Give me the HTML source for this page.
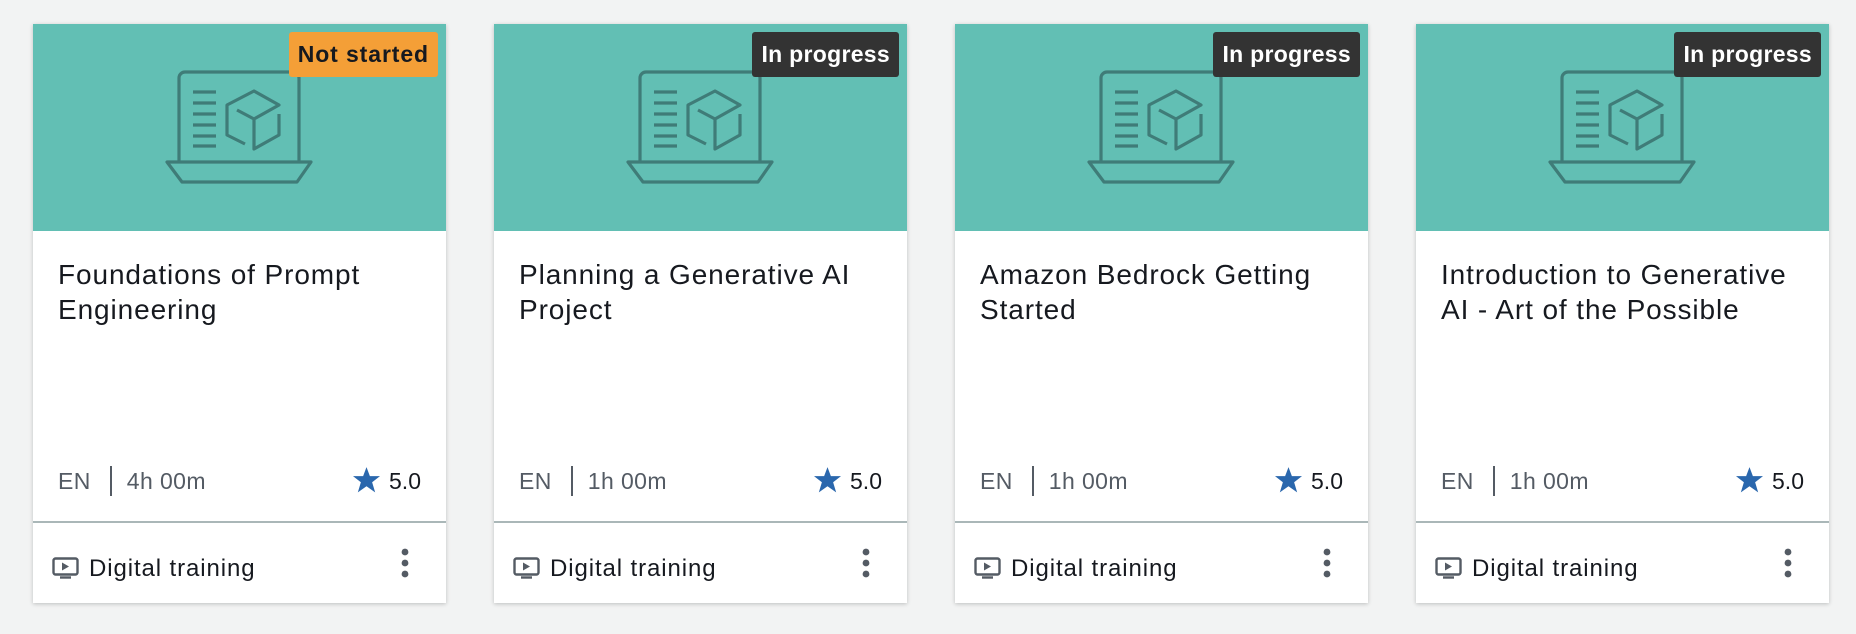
<!DOCTYPE html>
<html><head><meta charset="utf-8"><style>
*{margin:0;padding:0;box-sizing:border-box}
body{width:1856px;height:634px;background:#f2f3f3;font-family:"Liberation Sans",sans-serif;position:relative;overflow:hidden}
.card{position:absolute;top:24px;width:413px;height:579px;background:#fff;box-shadow:0 1px 4px rgba(0,0,0,.22)}
.img{position:absolute;left:0;top:0;width:413px;height:207px;background:#62bfb4}
.img svg{position:absolute;left:0;top:0}
.badge{position:absolute;top:8px;right:8px;height:45px;padding:0 9px;border-radius:3px;font-weight:bold;font-size:23px;line-height:45px;color:#fff;background:#333;letter-spacing:0.3px}
.badge.ns{background:#f49f37;color:#16191f;letter-spacing:0.9px}
.title{position:absolute;left:25px;top:233px;width:375px;font-size:28px;letter-spacing:0.9px;line-height:35px;color:#16191f}
.meta{position:absolute;left:25px;top:439px;font-size:23px;color:#545b64;line-height:36px;letter-spacing:0.4px}
.meta .sep{display:inline-block;width:2px;height:30px;background:#545b64;vertical-align:middle;margin:0 15px 0 19px;position:relative;top:-2px}
.rate{position:absolute;right:25px;top:439px;font-size:23px;color:#16191f;line-height:36px}
.rate svg{vertical-align:middle;margin-right:9px;position:relative;top:-3px}
.div{position:absolute;left:0;right:0;top:497px;height:2px;background:#aab7b8}
.foot{position:absolute;left:19px;top:527px;font-size:24px;color:#16191f;line-height:36px;letter-spacing:0.9px}
.foot svg{vertical-align:middle;margin-right:10px;position:relative;top:-2px}
.kebab{position:absolute;left:366px;top:522px}
</style></head><body>

<div class="card" style="left:33px">
<div class="img"><svg width="413" height="207" viewBox="0 0 413 207" fill="none" stroke="#3f7c78" stroke-width="3.2" stroke-linejoin="round"><g transform="translate(0,-24)">
<path d="M146 162V78a6 6 0 0 1 6-6h108a6 6 0 0 1 6 6v84"/>
<path d="M134 162h144l-14 20H149z"/>
<path d="M160 92h23M160 103h23M160 114h23M160 125h23M160 136h23M160 146h23"/>
<path d="M212 144L194 135V105L221 91L246 105L221 119L204 110M221 119V149L246 135V114"/>
</g></svg><div class="badge ns">Not started</div></div>
<div class="title">Foundations of Prompt Engineering</div>
<div class="meta">EN<span class="sep"></span>4h 00m</div>
<div class="rate"><svg width="27" height="26" viewBox="0 0 24 23"><path fill="#2a67ad" d="M12 0l3 8h9l-7 5.5 2.7 9L12 17l-7.7 5.5 2.7-9L0 8h9z"/></svg>5.0</div>
<div class="div"></div>
<div class="foot"><svg width="27" height="22" viewBox="0 0 27 22" fill="none" stroke="#545b64" stroke-width="2.4"><rect x="1.5" y="1.5" width="24" height="16" rx="2"/><path d="M10 5.5v8l7-4z" fill="#545b64" stroke="none"/><path d="M8 20.5h11"/></svg>Digital training</div>
<svg class="kebab" width="12" height="40" viewBox="0 0 12 40" fill="#545b64"><circle cx="6" cy="6" r="3.4"/><circle cx="6" cy="17" r="3.4"/><circle cx="6" cy="28" r="3.4"/></svg>
</div>

<div class="card" style="left:494px">
<div class="img"><svg width="413" height="207" viewBox="0 0 413 207" fill="none" stroke="#3f7c78" stroke-width="3.2" stroke-linejoin="round"><g transform="translate(0,-24)">
<path d="M146 162V78a6 6 0 0 1 6-6h108a6 6 0 0 1 6 6v84"/>
<path d="M134 162h144l-14 20H149z"/>
<path d="M160 92h23M160 103h23M160 114h23M160 125h23M160 136h23M160 146h23"/>
<path d="M212 144L194 135V105L221 91L246 105L221 119L204 110M221 119V149L246 135V114"/>
</g></svg><div class="badge">In progress</div></div>
<div class="title">Planning a Generative AI Project</div>
<div class="meta">EN<span class="sep"></span>1h 00m</div>
<div class="rate"><svg width="27" height="26" viewBox="0 0 24 23"><path fill="#2a67ad" d="M12 0l3 8h9l-7 5.5 2.7 9L12 17l-7.7 5.5 2.7-9L0 8h9z"/></svg>5.0</div>
<div class="div"></div>
<div class="foot"><svg width="27" height="22" viewBox="0 0 27 22" fill="none" stroke="#545b64" stroke-width="2.4"><rect x="1.5" y="1.5" width="24" height="16" rx="2"/><path d="M10 5.5v8l7-4z" fill="#545b64" stroke="none"/><path d="M8 20.5h11"/></svg>Digital training</div>
<svg class="kebab" width="12" height="40" viewBox="0 0 12 40" fill="#545b64"><circle cx="6" cy="6" r="3.4"/><circle cx="6" cy="17" r="3.4"/><circle cx="6" cy="28" r="3.4"/></svg>
</div>

<div class="card" style="left:955px">
<div class="img"><svg width="413" height="207" viewBox="0 0 413 207" fill="none" stroke="#3f7c78" stroke-width="3.2" stroke-linejoin="round"><g transform="translate(0,-24)">
<path d="M146 162V78a6 6 0 0 1 6-6h108a6 6 0 0 1 6 6v84"/>
<path d="M134 162h144l-14 20H149z"/>
<path d="M160 92h23M160 103h23M160 114h23M160 125h23M160 136h23M160 146h23"/>
<path d="M212 144L194 135V105L221 91L246 105L221 119L204 110M221 119V149L246 135V114"/>
</g></svg><div class="badge">In progress</div></div>
<div class="title">Amazon Bedrock Getting Started</div>
<div class="meta">EN<span class="sep"></span>1h 00m</div>
<div class="rate"><svg width="27" height="26" viewBox="0 0 24 23"><path fill="#2a67ad" d="M12 0l3 8h9l-7 5.5 2.7 9L12 17l-7.7 5.5 2.7-9L0 8h9z"/></svg>5.0</div>
<div class="div"></div>
<div class="foot"><svg width="27" height="22" viewBox="0 0 27 22" fill="none" stroke="#545b64" stroke-width="2.4"><rect x="1.5" y="1.5" width="24" height="16" rx="2"/><path d="M10 5.5v8l7-4z" fill="#545b64" stroke="none"/><path d="M8 20.5h11"/></svg>Digital training</div>
<svg class="kebab" width="12" height="40" viewBox="0 0 12 40" fill="#545b64"><circle cx="6" cy="6" r="3.4"/><circle cx="6" cy="17" r="3.4"/><circle cx="6" cy="28" r="3.4"/></svg>
</div>

<div class="card" style="left:1416px">
<div class="img"><svg width="413" height="207" viewBox="0 0 413 207" fill="none" stroke="#3f7c78" stroke-width="3.2" stroke-linejoin="round"><g transform="translate(0,-24)">
<path d="M146 162V78a6 6 0 0 1 6-6h108a6 6 0 0 1 6 6v84"/>
<path d="M134 162h144l-14 20H149z"/>
<path d="M160 92h23M160 103h23M160 114h23M160 125h23M160 136h23M160 146h23"/>
<path d="M212 144L194 135V105L221 91L246 105L221 119L204 110M221 119V149L246 135V114"/>
</g></svg><div class="badge">In progress</div></div>
<div class="title">Introduction to Generative<br>AI - Art of the Possible</div>
<div class="meta">EN<span class="sep"></span>1h 00m</div>
<div class="rate"><svg width="27" height="26" viewBox="0 0 24 23"><path fill="#2a67ad" d="M12 0l3 8h9l-7 5.5 2.7 9L12 17l-7.7 5.5 2.7-9L0 8h9z"/></svg>5.0</div>
<div class="div"></div>
<div class="foot"><svg width="27" height="22" viewBox="0 0 27 22" fill="none" stroke="#545b64" stroke-width="2.4"><rect x="1.5" y="1.5" width="24" height="16" rx="2"/><path d="M10 5.5v8l7-4z" fill="#545b64" stroke="none"/><path d="M8 20.5h11"/></svg>Digital training</div>
<svg class="kebab" width="12" height="40" viewBox="0 0 12 40" fill="#545b64"><circle cx="6" cy="6" r="3.4"/><circle cx="6" cy="17" r="3.4"/><circle cx="6" cy="28" r="3.4"/></svg>
</div>

</body></html>
